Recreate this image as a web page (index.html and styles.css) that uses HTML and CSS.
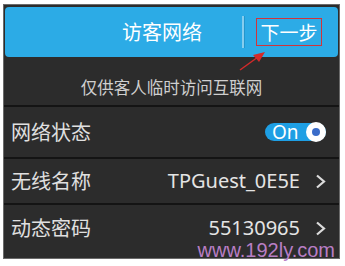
FILE: index.html
```html
<!DOCTYPE html>
<html>
<head>
<meta charset="utf-8">
<link rel="stylesheet" href="styles.css">
</head>
<body>
<div class="panel">
  <div class="header">
    <div class="title">访客网络</div>
    <div class="sep"></div>
    <div class="next">下一步</div>
  </div>
  <div class="subtitle">仅供客人临时访问互联网</div>
  <div class="divider"></div>
  <div class="row r1">
    <span class="label">网络状态</span>
    <span class="toggle"><span class="on">On</span><span class="knob"><span class="dot"></span></span></span>
  </div>
  <div class="divider"></div>
  <div class="row r2">
    <span class="label">无线名称</span>
    <span class="value">TPGuest_0E5E</span>
    <svg class="chev" width="12" height="15" viewBox="0 0 12 15"><path d="M3 1.5 L10 7.5 L3 13.5" fill="none" stroke="#dcdcdc" stroke-width="2.2"/></svg>
  </div>
  <div class="divider"></div>
  <div class="row r3">
    <span class="label">动态密码</span>
    <span class="value">55130965</span>
    <svg class="chev" width="12" height="15" viewBox="0 0 12 15"><path d="M3 1.5 L10 7.5 L3 13.5" fill="none" stroke="#dcdcdc" stroke-width="2.2"/></svg>
  </div>
  <div class="watermark">www.192ly.com</div>
  <svg class="arrow" width="40" height="30" viewBox="0 0 40 30"><line x1="2" y1="25" x2="20" y2="12" stroke="#d42a2a" stroke-width="1.5"/><polygon points="27,7 15,10 21,17" fill="#d42a2a"/></svg>
</div>
</body>
</html>
```
FILE: styles.css
```css
html, body { margin: 0; padding: 0; background: #fff; }
body { width: 345px; height: 266px; overflow: hidden; }
.panel {
  position: relative;
  margin: 4px 0 0 3px;
  width: 335px;
  height: 253px;
  background: #2c2c2c;
  border: 1px solid #6a6a6a;
  font-family: "Noto Sans", "Noto Sans CJK SC", sans-serif;
  color: #e2e2e2;
}
.header {
  margin: 2px 1px 0 1px;
  height: 50px;
  background: #2cabe6;
  border-radius: 4px;
  display: flex;
  align-items: center;
  color: #fff;
}
.title {
  flex: 1;
  padding-left: 77px;
  text-align: center;
  font-size: 20px;
  font-family: "Noto Sans CJK SC", sans-serif;
  line-height: 24px;
}
.sep {
  width: 2px;
  height: 32px;
  background: #86cdee;
  box-shadow: 1px 0 0 #2396cc;
}
.next {
  margin: 0 16px 0 12px;
  width: 64px;
  height: 26px;
  border: 1px solid #d2343a;
  font-size: 19px;
  font-family: "Noto Sans CJK SC", sans-serif;
  line-height: 26px;
  text-align: center;
}
.subtitle {
  height: 48px;
  padding: 20px 0 0;
  box-sizing: border-box;
  text-align: center;
  font-size: 16.5px;
  line-height: 20px;
  color: #cfcfcf;
  font-family: "Noto Sans CJK SC", sans-serif;
}
.divider { height: 2px; background: #141414; }
.row {
  display: flex;
  align-items: center;
  padding: 0 13px 0 7px;
  font-size: 20px;
  line-height: 22px;
}
.r1 { height: 50px; }
.r2 { height: 44px; }
.r3 { height: 46px; }
.label { flex: 1; font-family: "Noto Sans CJK SC", sans-serif; color: #e0e0e0; }
.value { margin-right: 14px; color: #e4e4e4; }
.chev { display: block; }
.toggle {
  display: flex;
  align-items: center;
  width: 61px;
  height: 18px;
  border-radius: 9px;
  background: #1e9fe4;
}
.on {
  margin-left: 7px;
  font-size: 19px;
  line-height: 18px;
  color: #fff;
  width: 32px;
}
.knob {
  margin-left: auto;
  width: 20px;
  height: 20px;
  border-radius: 50%;
  background: #fff;
  display: flex;
  align-items: center;
  justify-content: center;
}
.dot { width: 8px; height: 8px; border-radius: 50%; background: #3a6cc9; }
.watermark {
  position: absolute;
  right: 4px;
  bottom: 0;
  font-family: "Liberation Sans", Arial, sans-serif;
  font-size: 20px;
  line-height: 16px;
  color: #b87ec4;
}
.arrow { position: absolute; left: 234px; top: 40px; }
```
